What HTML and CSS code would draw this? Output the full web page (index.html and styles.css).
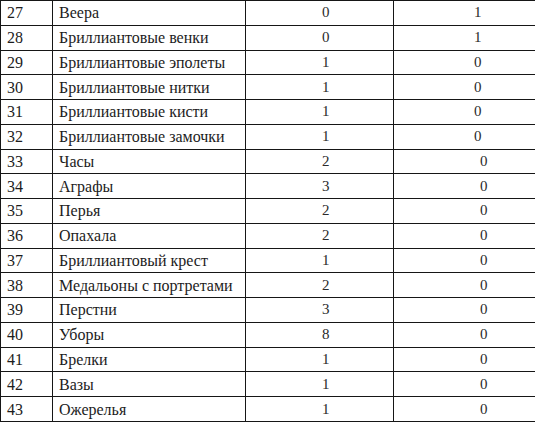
FILE: index.html
```html
<!DOCTYPE html>
<html lang="ru">
<head>
<meta charset="utf-8">
<link rel="stylesheet" href="styles.css">
</head>
<body>
<table class="list">
  <colgroup>
    <col class="c-num"><col class="c-name"><col class="c-a"><col class="c-b">
  </colgroup>
  <tbody>
    <tr><td class="num">27</td><td class="name">Веера</td><td class="a">0</td><td class="b">1</td></tr>
    <tr><td class="num">28</td><td class="name">Бриллиантовые венки</td><td class="a">0</td><td class="b">1</td></tr>
    <tr><td class="num">29</td><td class="name">Бриллиантовые эполеты</td><td class="a">1</td><td class="b">0</td></tr>
    <tr><td class="num">30</td><td class="name">Бриллиантовые нитки</td><td class="a">1</td><td class="b">0</td></tr>
    <tr><td class="num">31</td><td class="name">Бриллиантовые кисти</td><td class="a">1</td><td class="b">0</td></tr>
    <tr><td class="num">32</td><td class="name">Бриллиантовые замочки</td><td class="a">1</td><td class="b">0</td></tr>
    <tr><td class="num">33</td><td class="name">Часы</td><td class="a">2</td><td class="b b2">0</td></tr>
    <tr><td class="num">34</td><td class="name">Аграфы</td><td class="a">3</td><td class="b b2">0</td></tr>
    <tr><td class="num">35</td><td class="name">Перья</td><td class="a">2</td><td class="b b2">0</td></tr>
    <tr><td class="num">36</td><td class="name">Опахала</td><td class="a">2</td><td class="b b2">0</td></tr>
    <tr><td class="num">37</td><td class="name">Бриллиантовый крест</td><td class="a">1</td><td class="b b2">0</td></tr>
    <tr><td class="num">38</td><td class="name">Медальоны с портретами</td><td class="a">2</td><td class="b b2">0</td></tr>
    <tr><td class="num">39</td><td class="name">Перстни</td><td class="a">3</td><td class="b b2">0</td></tr>
    <tr><td class="num">40</td><td class="name">Уборы</td><td class="a">8</td><td class="b b2">0</td></tr>
    <tr><td class="num">41</td><td class="name">Брелки</td><td class="a">1</td><td class="b b2">0</td></tr>
    <tr><td class="num">42</td><td class="name">Вазы</td><td class="a">1</td><td class="b b2">0</td></tr>
    <tr><td class="num">43</td><td class="name">Ожерелья</td><td class="a">1</td><td class="b b2">0</td></tr>
  </tbody>
</table>
</body>
</html>
```

FILE: styles.css
```css
html, body {
  margin: 0;
  padding: 0;
  background: #ffffff;
}
.list {
  border-collapse: collapse;
  table-layout: fixed;
  width: 535px;
  height: 422px;
  font-family: "Liberation Serif", serif;
  color: #1c1c1c;
}
.c-num { width: 52px; }
.c-name { width: 193px; }
.c-a { width: 148px; }
.c-b { width: 142px; }
.list td {
  border: 1.5px solid #161616;
  padding: 0;
  line-height: 1;
  vertical-align: middle;
  white-space: nowrap;
}
.list .num, .list .name {
  font-size: 16px;
  padding-left: 6px;
  padding-top: 1px;
}
.list .a, .list .b {
  font-size: 15px;
  color: #2a2a2a;
}
.list .a { padding-left: 76px; }
.list .b { padding-left: 80px; }
.list .b2 { padding-left: 86px; }
```
